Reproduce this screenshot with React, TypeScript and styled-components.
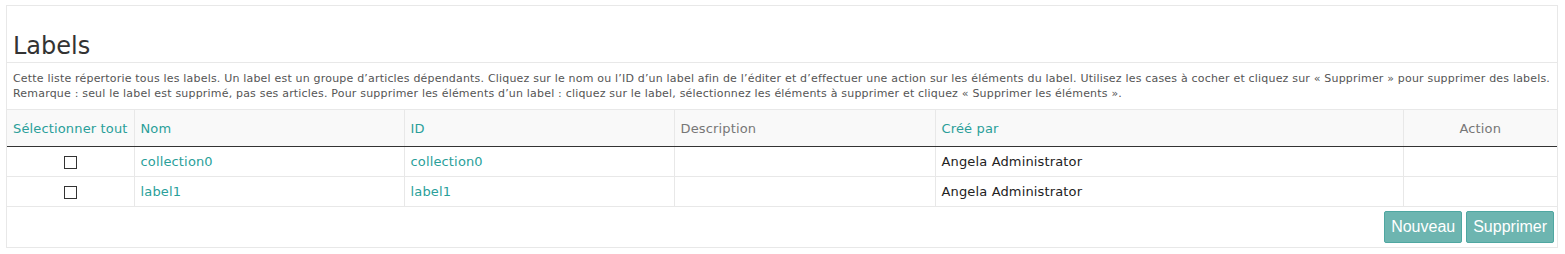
import React, { FC } from 'react';
import styled, { createGlobalStyle } from 'styled-components';

const GlobalStyle = createGlobalStyle`
  body {
    margin: 0;
    padding: 5px 7px 6px 6px;
    background: #fff;
    font-family: 'DejaVu Sans', Verdana, sans-serif;
    color: #333;
  }
`;

const Panel = styled.div`
  border: 1px solid #e8e8e8;
  background: #fff;
`;

const Title = styled.h1`
  margin: 0;
  padding: 25px 6px 0 6px;
  height: 31px;
  font-size: 24px;
  font-weight: normal;
  line-height: 30px;
  color: #333;
  border-bottom: 1px solid #e8e8e8;
`;

const Intro = styled.p`
  margin: 0;
  padding: 8px 6px 8px 6px;
  font-size: 11px;
  line-height: 15px;
  letter-spacing: 0.19px;
  color: #555;
  white-space: nowrap;
`;

const Table = styled.table`
  width: 100%;
  border-collapse: collapse;
  table-layout: fixed;
  font-size: 13px;
  letter-spacing: 0.15px;
`;

const Head = styled.th<{ $align?: string; $link?: boolean }>`
  height: 36px;
  padding: 0 6px;
  text-align: ${({ $align }) => $align || 'left'};
  font-weight: normal;
  color: ${({ $link }) => ($link ? '#2a9f9a' : '#777')};
  background: #f9f9f9;
  border-top: 1px solid #e8e8e8;
  border-left: 1px solid #e8e8e8;
  border-bottom: 1px solid #333;
  white-space: nowrap;

  &:first-child {
    border-left: none;
  }
`;

const Cell = styled.td<{ $align?: string }>`
  height: 29px;
  padding: 0 6px;
  text-align: ${({ $align }) => $align || 'left'};
  border-left: 1px solid #e8e8e8;
  border-bottom: 1px solid #e8e8e8;
  color: #222;

  &:first-child {
    border-left: none;
  }
`;

const Link = styled.a`
  color: #2a9f9a;
  text-decoration: none;
`;

const Box = styled.span`
  display: inline-block;
  width: 11px;
  height: 11px;
  border: 1px solid #333;
  vertical-align: middle;
  background: #fff;
`;

const Footer = styled.div`
  display: flex;
  justify-content: flex-end;
  gap: 4px;
  padding: 4px 3px 4px 0;
`;

const Button = styled.button`
  height: 32px;
  padding: 0 6px;
  font-family: 'Liberation Sans', Arial, sans-serif;
  font-size: 16px;
  color: #fff;
  background: #6db5b0;
  border: 1px solid #4fa7a1;
  border-radius: 2px;
`;

type Label = { name: string; id: string; creator: string };

const labels: Label[] = [
  { name: 'collection0', id: 'collection0', creator: 'Angela Administrator' },
  { name: 'label1', id: 'label1', creator: 'Angela Administrator' },
];

const App: FC = () => (
  <>
    <GlobalStyle />
    <Panel>
      <Title>Labels</Title>
      <Intro>
        Cette liste répertorie tous les labels. Un label est un groupe d’articles dépendants. Cliquez sur le nom ou l’ID d’un label afin de l’éditer et d’effectuer une action sur les éléments du label. Utilisez les cases à cocher et cliquez sur « Supprimer » pour supprimer des labels.
        <br />
        Remarque : seul le label est supprimé, pas ses articles. Pour supprimer les éléments d’un label : cliquez sur le label, sélectionnez les éléments à supprimer et cliquez « Supprimer les éléments ».
      </Intro>
      <Table>
        <colgroup>
          <col style={{ width: 127 }} />
          <col style={{ width: 270 }} />
          <col style={{ width: 270 }} />
          <col style={{ width: 261 }} />
          <col style={{ width: 468 }} />
          <col />
        </colgroup>
        <thead>
          <tr>
            <Head $link>Sélectionner tout</Head>
            <Head $link>Nom</Head>
            <Head $link>ID</Head>
            <Head>Description</Head>
            <Head $link>Créé par</Head>
            <Head $align="center">Action</Head>
          </tr>
        </thead>
        <tbody>
          {labels.map((l) => (
            <tr key={l.id}>
              <Cell $align="center">
                <Box />
              </Cell>
              <Cell>
                <Link href="#">{l.name}</Link>
              </Cell>
              <Cell>
                <Link href="#">{l.id}</Link>
              </Cell>
              <Cell />
              <Cell>{l.creator}</Cell>
              <Cell />
            </tr>
          ))}
        </tbody>
      </Table>
      <Footer>
        <Button>Nouveau</Button>
        <Button>Supprimer</Button>
      </Footer>
    </Panel>
  </>
);

export default App;
